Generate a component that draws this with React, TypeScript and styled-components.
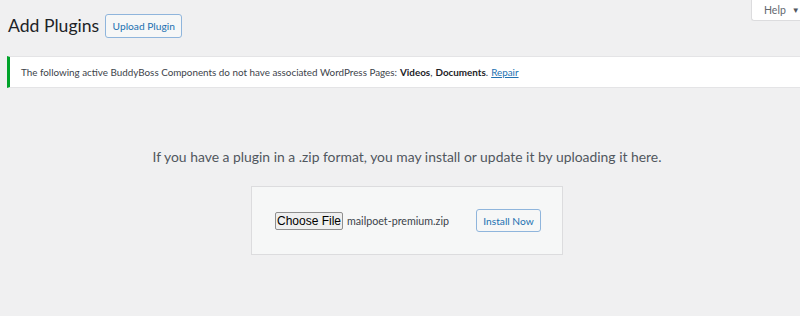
import React from 'react';
import styled, { createGlobalStyle } from 'styled-components';

const GlobalStyle = createGlobalStyle`
  html, body {
    margin: 0;
    padding: 0;
    background: #f0f0f1;
  }
  body {
    font-family: Lato, "Noto Sans", sans-serif;
    color: #3c434a;
  }
`;

const Page = styled.div`
  width: 800px;
  height: 316px;
  overflow: hidden;
  background: #f0f0f1;
  display: flex;
  flex-direction: column;
`;

const TopBar = styled.div`
  display: flex;
  justify-content: space-between;
  align-items: flex-start;
  padding-left: 8px;
  height: 56px;
`;

const Header = styled.div`
  display: flex;
  align-items: center;
  gap: 6px;
  padding-top: 13px;
`;

const Title = styled.h1`
  margin: 0;
  font-size: 17.6px;
  font-weight: 400;
  color: #1d2327;
  line-height: 26px;
`;

const OutlineButton = styled.button<{ $w: number; $h: number }>`
  width: ${p => p.$w}px;
  height: ${p => p.$h}px;
  padding: 0;
  border: 1px solid #8fb5dc;
  border-radius: 3px;
  background: #f6f7f7;
  color: #2271b1;
  font-family: Lato, "Noto Sans", sans-serif;
  font-size: 10.2px;
  cursor: pointer;
`;

const HelpTab = styled.div`
  width: 49px;
  height: 21px;
  box-sizing: border-box;
  background: #fff;
  border: 1px solid #dcdcde;
  border-top: none;
  border-right: none;
  border-bottom-left-radius: 3px;
  display: flex;
  align-items: center;
  gap: 6px;
  padding-left: 12px;
  font-size: 10.5px;
  color: #646970;
`;

const Caret = styled.span`
  font-size: 8px;
  color: #50575e;
`;

const Notice = styled.div`
  margin-left: 7px;
  height: 32px;
  box-sizing: border-box;
  background: #fff;
  border: 1px solid #e4e4e6;
  border-right: none;
  border-left: 3px solid #00a32a;
  display: flex;
  align-items: center;
  padding-left: 11px;
  font-size: 9.85px;
  color: #3c434a;
`;

const Strong = styled.strong`
  font-weight: 700;
  color: #1d2327;
  margin-left: 3px;
`;

const Link = styled.a`
  color: #2271b1;
  text-decoration: underline;
  margin-left: 3px;
`;

const Upload = styled.div`
  padding-left: 14px;
  display: flex;
  flex-direction: column;
  align-items: center;
  padding-top: 59px;
`;

const UploadText = styled.p`
  margin: 0;
  font-size: 13.9px;
  color: #50575e;
  line-height: 20px;
`;

const UploadBox = styled.div`
  margin-top: 19px;
  width: 312px;
  height: 69px;
  box-sizing: border-box;
  background: #f6f7f7;
  border: 1px solid #dcdcde;
  display: flex;
  align-items: center;
  padding-left: 23px;
`;

const ChooseButton = styled.button`
  width: 68px;
  height: 18px;
  padding: 0;
  box-sizing: border-box;
  border: 1px solid #8f8f8f;
  border-radius: 2px;
  background: #efefef;
  font-family: "Liberation Sans", Arial, sans-serif;
  font-size: 12px;
  color: #000;
`;

const FileName = styled.span`
  margin-left: 4px;
  font-size: 10.7px;
  color: #3c434a;
  width: 129px;
`;

export default function App() {
  return (
    <Page>
      <GlobalStyle />
      <TopBar>
        <Header>
          <Title>Add Plugins</Title>
          <OutlineButton $w={77} $h={24}>Upload Plugin</OutlineButton>
        </Header>
        <HelpTab>
          Help <Caret>▼</Caret>
        </HelpTab>
      </TopBar>
      <Notice>
        The following active BuddyBoss Components do not have associated WordPress Pages:
        <Strong>Videos</Strong>,<Strong>Documents</Strong>.
        <Link href="#">Repair</Link>
      </Notice>
      <Upload>
        <UploadText>
          If you have a plugin in a .zip format, you may install or update it by uploading it here.
        </UploadText>
        <UploadBox>
          <ChooseButton>Choose File</ChooseButton>
          <FileName>mailpoet-premium.zip</FileName>
          <OutlineButton $w={65} $h={23}>Install Now</OutlineButton>
        </UploadBox>
      </Upload>
    </Page>
  );
}
